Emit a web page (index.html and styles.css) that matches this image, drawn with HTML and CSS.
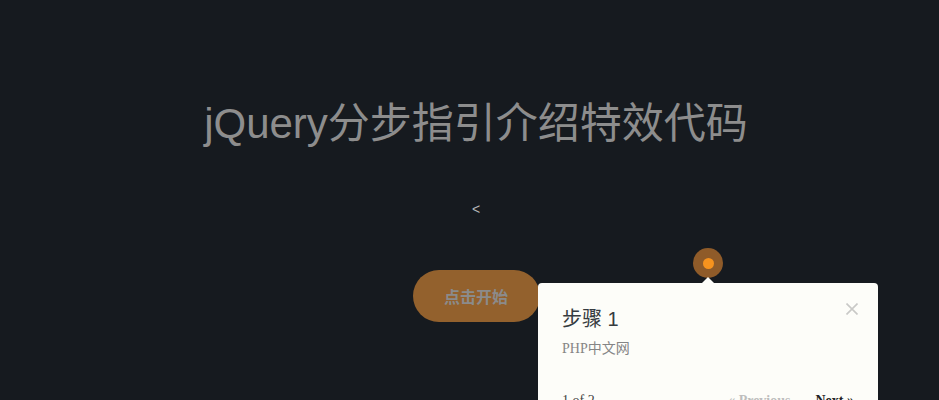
FILE: index.html
```html
<!DOCTYPE html>
<html lang="zh-CN">
<head>
<meta charset="utf-8">
<title>jQuery分步指引介绍特效代码</title>
<link rel="stylesheet" href="styles.css">
</head>
<body>
<main class="page">
  <h1 class="title">jQuery分步指引介绍特效代码</h1>
  <div class="caret">&lt;</div>
  <button class="start" type="button">点击开始</button>
</main>

<div class="hotspot"><span class="hotspot-core"></span></div>

<section class="tour">
  <span class="tour-arrow"></span>
  <button class="tour-close" type="button" aria-label="close">
    <svg width="12" height="12" viewBox="0 0 12 12"><path d="M0.5 0.5 L11.5 11.5 M11.5 0.5 L0.5 11.5" stroke="#c9c9c7" stroke-width="1.6" fill="none"/></svg>
  </button>
  <h3 class="tour-title">步骤 1</h3>
  <div class="tour-content">PHP中文网</div>
  <div class="tour-footer">
    <span class="tour-count">1 of 2</span>
    <div class="tour-nav">
      <span class="tour-prev">« Previous</span>
      <span class="tour-next">Next »</span>
    </div>
  </div>
</section>
</body>
</html>
```

FILE: styles.css
```css
html, body {
  margin: 0;
  padding: 0;
}
body {
  background: #161a1f;
  width: 939px;
  height: 400px;
  overflow: hidden;
  position: relative;
  font-family: "Liberation Sans", Arial, "Noto Sans CJK SC", sans-serif;
}
.page {
  display: flex;
  flex-direction: column;
  align-items: center;
  padding-left: 13px;
}
.title {
  margin: 100px 0 0;
  font-size: 42px;
  line-height: 48px;
  font-weight: normal;
  color: #8d8d8d;
  white-space: nowrap;
}
.caret {
  margin-top: 53px;
  font-size: 14px;
  line-height: 16px;
  color: #b4b4b4;
}
.start {
  margin-top: 53px;
  width: 127px;
  height: 52px;
  border: none;
  border-radius: 26px;
  background: #93612d;
  color: #8b8b8b;
  font-family: "Liberation Sans", Arial, "Noto Sans CJK SC", sans-serif;
  font-size: 16px;
  font-weight: bold;
  padding: 0;
}
.hotspot {
  position: absolute;
  left: 693px;
  top: 248px;
  width: 30px;
  height: 30px;
  border-radius: 50%;
  background: #8f5b29;
  display: flex;
  align-items: center;
  justify-content: center;
}
.hotspot-core {
  width: 11px;
  height: 11px;
  border-radius: 50%;
  background: #f7931e;
}
.tour {
  position: absolute;
  left: 538px;
  top: 283px;
  width: 340px;
  height: 160px;
  box-sizing: border-box;
  padding: 23px 24px 0;
  background: #fdfdf9;
  border-radius: 4px;
  z-index: 2;
}
.tour-arrow {
  position: absolute;
  left: 164px;
  top: -6px;
  width: 0;
  height: 0;
  border-left: 6px solid transparent;
  border-right: 6px solid transparent;
  border-bottom: 6px solid #fdfdf9;
}
.tour-close {
  position: absolute;
  right: 20px;
  top: 20px;
  width: 12px;
  height: 12px;
  padding: 0;
  border: none;
  background: none;
  display: flex;
}
.tour-title {
  margin: 0;
  font-size: 20px;
  line-height: 26px;
  font-weight: normal;
  color: #363b40;
}
.tour-content {
  margin-top: 7px;
  font-family: "Liberation Serif", "Times New Roman", "Noto Sans CJK SC", serif;
  font-size: 14px;
  line-height: 20px;
  color: #858585;
}
.tour-footer {
  margin-top: 33px;
  display: flex;
  justify-content: space-between;
  align-items: baseline;
  font-family: "Liberation Serif", "Times New Roman", serif;
  font-size: 14px;
  line-height: 18px;
}
.tour-count {
  color: #444;
}
.tour-nav {
  display: flex;
  gap: 25px;
  font-weight: bold;
}
.tour-prev {
  color: #bdbdbd;
}
.tour-next {
  color: #222;
}
```
